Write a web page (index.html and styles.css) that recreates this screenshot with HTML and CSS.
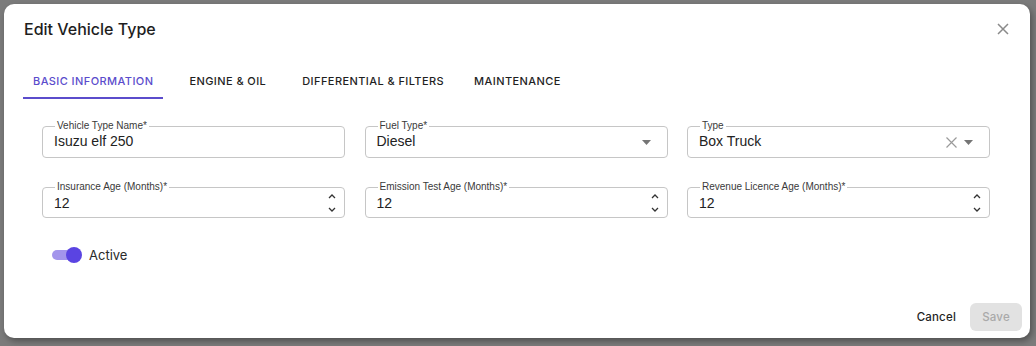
FILE: index.html
```html
<!DOCTYPE html>
<html>
<head>
<meta charset="utf-8">
<link rel="stylesheet" href="styles.css">
</head>
<body>
<div class="dialog">
  <div class="header">
    <h2 class="title">Edit Vehicle Type</h2>
    <button class="close" aria-label="close">
      <svg width="12" height="12" viewBox="0 0 12 12"><path d="M1 1L11 11M11 1L1 11" stroke="#8a8a8a" stroke-width="1.5" fill="none"/></svg>
    </button>
  </div>
  <div class="tabs">
    <div class="tab active">Basic Information</div>
    <div class="tab">Engine &amp; Oil</div>
    <div class="tab tight">Differential &amp; Filters</div>
    <div class="tab">Maintenance</div>
  </div>
  <div class="grid">
    <div class="field">
      <span class="label">Vehicle Type Name*</span>
      <span class="value">Isuzu elf 250</span>
    </div>
    <div class="field">
      <span class="label">Fuel Type*</span>
      <span class="value">Diesel</span>
      <span class="adorn">
        <svg class="caret" width="9" height="5" viewBox="0 0 9 5"><path d="M0 0H9L4.5 5Z" fill="#757575"/></svg>
      </span>
    </div>
    <div class="field">
      <span class="label">Type</span>
      <span class="value">Box Truck</span>
      <span class="adorn">
        <svg class="clear" width="11" height="11" viewBox="0 0 11 11"><path d="M0.5 0.5L10.5 10.5M10.5 0.5L0.5 10.5" stroke="#9a9a9a" stroke-width="1.2" fill="none"/></svg>
        <svg class="caret" width="9" height="5" viewBox="0 0 9 5"><path d="M0 0H9L4.5 5Z" fill="#757575"/></svg>
      </span>
    </div>
    <div class="field num">
      <span class="label">Insurance Age (Months)*</span>
      <span class="value">12</span>
      <span class="spin">
        <svg width="8" height="5" viewBox="0 0 8 5"><path d="M1 4L4 1L7 4" stroke="#333" stroke-width="1.3" fill="none"/></svg>
        <svg width="8" height="5" viewBox="0 0 8 5"><path d="M1 1L4 4L7 1" stroke="#333" stroke-width="1.3" fill="none"/></svg>
      </span>
    </div>
    <div class="field num">
      <span class="label">Emission Test Age (Months)*</span>
      <span class="value">12</span>
      <span class="spin">
        <svg width="8" height="5" viewBox="0 0 8 5"><path d="M1 4L4 1L7 4" stroke="#333" stroke-width="1.3" fill="none"/></svg>
        <svg width="8" height="5" viewBox="0 0 8 5"><path d="M1 1L4 4L7 1" stroke="#333" stroke-width="1.3" fill="none"/></svg>
      </span>
    </div>
    <div class="field num">
      <span class="label">Revenue Licence Age (Months)*</span>
      <span class="value">12</span>
      <span class="spin">
        <svg width="8" height="5" viewBox="0 0 8 5"><path d="M1 4L4 1L7 4" stroke="#333" stroke-width="1.3" fill="none"/></svg>
        <svg width="8" height="5" viewBox="0 0 8 5"><path d="M1 1L4 4L7 1" stroke="#333" stroke-width="1.3" fill="none"/></svg>
      </span>
    </div>
  </div>
  <div class="toggle-row">
    <span class="switch"><span class="track"></span><span class="knob"></span></span>
    <span class="toggle-label">Active</span>
  </div>
  <div class="footer">
    <button class="btn cancel">Cancel</button>
    <button class="btn save" disabled>Save</button>
  </div>
</div>
</body>
</html>
```
FILE: styles.css
```css
* { box-sizing: border-box; }
html, body { margin: 0; }
body {
  width: 1036px;
  height: 346px;
  background: #7b7b7b;
  padding: 4px 0 0 4px;
  font-family: Inter, "Noto Sans", sans-serif;
  overflow: hidden;
}
.dialog {
  width: 1026px;
  height: 334px;
  background: #fff;
  border-radius: 10px;
  box-shadow: 2px 3px 6px rgba(0,0,0,0.35);
  display: flex;
  flex-direction: column;
  position: relative;
}
.header {
  display: flex;
  justify-content: space-between;
  align-items: center;
  padding: 13px 21px 0 20px;
  height: 37px;
}
.title {
  margin: 0;
  font-size: 16px;
  font-weight: 500;
  color: #1e1e1e;
  line-height: 24px;
}
.close {
  background: none;
  border: 0;
  padding: 0;
  width: 12px;
  height: 12px;
  display: flex;
}
.tabs {
  display: flex;
  margin: 18px 0 0 19px;
  height: 40px;
}
.tab {
  text-transform: uppercase;
  font-size: 11px;
  font-weight: 500;
  color: #1f1f1f;
  letter-spacing: 0.42px;
  padding: 4px 10px 0;
  display: flex;
  align-items: center;
  margin-right: 16px;
}
.tab.tight { margin-right: 10px; }
.tab.active {
  color: #5b4ccc;
  border-bottom: 2px solid #5b4ccc;
  padding-top: 6px;
}
.grid {
  display: grid;
  grid-template-columns: repeat(3, 303px);
  column-gap: 19.5px;
  row-gap: 29px;
  margin: 27px 0 0 38px;
  font-family: "Liberation Sans", Arial, sans-serif;
}
.field {
  position: relative;
  height: 32px;
  border: 1px solid #c6c6c6;
  border-radius: 4px;
  display: flex;
  align-items: center;
  padding: 0 12px 0 11px;
}
.num { height: 31px; }
.label {
  position: absolute;
  top: -7px;
  left: 12px;
  background: #fff;
  padding: 0 2px;
  font-size: 10px;
  line-height: 12px;
  color: #3a3a3a;
}
.value {
  font-size: 14px;
  color: #222;
  flex: 1;
  margin-top: -3px;
}
.num .value { margin-top: 0; padding-top: 0; }
.adorn {
  display: flex;
  align-items: center;
  gap: 7px;
  margin-right: 4px;
}
.spin {
  display: flex;
  flex-direction: column;
  gap: 8px;
  margin-right: -4px;
  padding-top: 1px;
}
.spin svg { display: block; }
.toggle-row {
  display: flex;
  align-items: center;
  margin: 27px 0 0 48px;
  height: 20px;
}
.switch {
  position: relative;
  width: 32px;
  height: 18px;
  display: inline-block;
}
.track {
  position: absolute;
  left: 0;
  top: 4px;
  width: 28px;
  height: 10px;
  border-radius: 5px;
  background: #a395ec;
}
.knob {
  position: absolute;
  left: 14px;
  top: 1px;
  width: 16px;
  height: 16px;
  border-radius: 50%;
  background: #5a44e2;
}
.toggle-label {
  font-size: 13px;
  color: #2a2a2a;
  margin-left: 5px;
}
.footer {
  margin-top: auto;
  display: flex;
  justify-content: flex-end;
  align-items: center;
  gap: 6px;
  padding: 0 8px 7px 0;
}
.btn {
  font-family: Inter, "Noto Sans", sans-serif;
  font-size: 11.5px;
  font-weight: 500;
  letter-spacing: 0.2px;
  border: 0;
  background: none;
  height: 28px;
  border-radius: 6px;
  padding: 0 8px;
}
.cancel { color: #1f1f1f; }
.save {
  width: 52px;
  background: #e2e2e2;
  color: #a9a9a9;
}
```
